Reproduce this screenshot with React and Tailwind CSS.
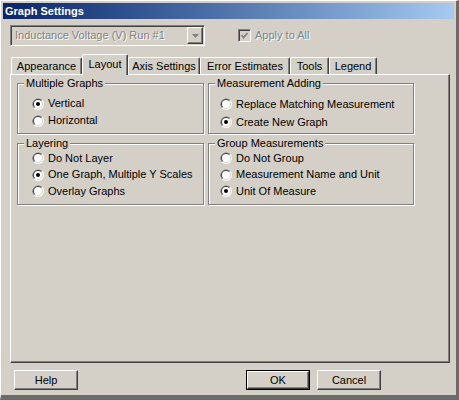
const raised =
	"border border-t-white border-l-white border-r-[#404040] border-b-[#404040] shadow-[inset_-1px_-1px_0_#808080]"
const sunken =
	"border border-t-[#808080] border-l-[#808080] border-r-white border-b-white shadow-[inset_1px_1px_0_#404040,inset_-1px_-1px_0_#d4d0c8]"

const Radio = ({ checked, label }) => {
	return (
		<div className="flex items-center gap-[4px]">
			<svg width="12" height="12" viewBox="0 0 12 12" className="flex-none">
				<circle cx="6" cy="6" r="6" fill="#ffffff" />
				<path d="M1.76 10.24 A6 6 0 0 1 10.24 1.76 Z" fill="#808080" />
				<circle cx="6" cy="6" r="5" fill="#d4d0c8" />
				<path d="M2.46 9.54 A5 5 0 0 1 9.54 2.46 Z" fill="#404040" />
				<circle cx="6" cy="6" r="4" fill="#ffffff" />
				{checked && <circle cx="6" cy="6" r="2" fill="#000000" />}
			</svg>
			<span>{label}</span>
		</div>
	)
}

const GroupBox = ({ title, className, children }) => {
	return (
		<div
			className={
				"relative border border-[#808080] shadow-[inset_1px_1px_0_#fff,1px_1px_0_#fff] " +
				className
			}
		>
			<span className="absolute -top-[7px] left-[6px] px-[2px] leading-[13px] bg-[#d4d0c8]">
				{title}
			</span>
			{children}
		</div>
	)
}

const tabs = [
	{ name: "Appearance", w: "w-[71px]" },
	{ name: "Layout", w: "w-[46px]", active: true },
	{ name: "Axis Settings", w: "w-[72px]" },
	{ name: "Error Estimates", w: "w-[90px]" },
	{ name: "Tools", w: "w-[39px]" },
	{ name: "Legend", w: "w-[48px]" },
]

const App = () => {
	return (
		<div className="w-[459px] h-[400px] flex flex-col bg-[#d4d0c8] border-t border-l border-t-white border-l-white border-r-[3px] border-b-[5px] border-r-[#6b6b6b] border-b-[#6b6b6b] text-[11px] leading-[13px] text-black font-['Liberation_Sans',Arial,sans-serif] overflow-hidden">
			{/* title bar */}
			<div className="mt-[2px] mx-[2px] h-[16px] flex items-center pl-[2px] bg-gradient-to-r from-[#0a246a] to-[#a6caf0] text-white font-bold">
				Graph Settings
			</div>

			<div className="pl-[9px] flex flex-col">
				{/* run selector */}
				<div className="mt-[6px] flex items-center h-[21px]">
					<div className={"w-[195px] h-[21px] flex items-center justify-between pl-[4px] pr-[1px] " + sunken}>
						<span className="text-[#808080] [text-shadow:1px_1px_0_#fff]">
							Inductance Voltage (V) Run #1
						</span>
						<div className={"w-[16px] h-[17px] flex items-center justify-center " + raised}>
							<svg width="7" height="4" viewBox="0 0 7 4">
								<path d="M0 0 H7 L3.5 4 Z" fill="#808080" />
							</svg>
						</div>
					</div>
					<div className="ml-[33px] flex items-center gap-[4px]">
						<div className={"w-[13px] h-[13px] flex items-center justify-center " + sunken}>
							<svg width="9" height="9" viewBox="0 0 9 9">
								<polyline points="1.5,4 3.5,6.5 7.5,2" fill="none" stroke="#808080" strokeWidth="1.8" />
							</svg>
						</div>
						<span className="text-[#808080] [text-shadow:1px_1px_0_#fff]">Apply to All</span>
					</div>
				</div>

				{/* tabs */}
				<div className="mt-[8px] h-[20px] flex items-end pl-[1px]">
					{tabs.map((tab) => (
						<div
							key={tab.name}
							className={
								"flex items-center justify-center rounded-t-[2px] border-t border-l border-r border-t-white border-l-white border-r-[#404040] shadow-[inset_-1px_0_0_#808080] bg-[#d4d0c8] " +
								tab.w +
								(tab.active ? " h-[21px] -mb-px relative z-10 pb-[2px]" : " h-[17px]")
							}
						>
							{tab.name}
						</div>
					))}
				</div>

				{/* panel */}
				<div className="w-[440px] h-[289px] border border-t-white border-l-white border-r-[#404040] border-b-[#404040] shadow-[inset_-1px_-1px_0_#808080] pl-[6px] pt-[8px]">
					<div className="grid grid-cols-[187px_206px] grid-rows-[51px_62px] gap-x-[4px] gap-y-[9px]">
						<GroupBox title="Multiple Graphs" className="pl-[14px] pt-[11px]">
							<div className="h-[17px] flex items-center">
								<Radio checked label="Vertical" />
							</div>
							<div className="h-[17px] flex items-center">
								<Radio label="Horizontal" />
							</div>
						</GroupBox>

						<GroupBox title="Measurement Adding" className="pl-[11px] pt-[11px]">
							<div className="h-[18px] flex items-center">
								<Radio label="Replace Matching Measurement" />
							</div>
							<div className="h-[18px] flex items-center">
								<Radio checked label="Create New Graph" />
							</div>
						</GroupBox>

						<GroupBox title="Layering" className="pl-[14px] pt-[6px]">
							<div className="h-[16.5px] flex items-center">
								<Radio label="Do Not Layer" />
							</div>
							<div className="h-[16.5px] flex items-center">
								<Radio checked label="One Graph, Multiple Y Scales" />
							</div>
							<div className="h-[16.5px] flex items-center">
								<Radio label="Overlay Graphs" />
							</div>
						</GroupBox>

						<GroupBox title="Group Measurements" className="pl-[11px] pt-[6px]">
							<div className="h-[16.5px] flex items-center">
								<Radio label="Do Not Group" />
							</div>
							<div className="h-[16.5px] flex items-center">
								<Radio label="Measurement Name and Unit" />
							</div>
							<div className="h-[16.5px] flex items-center">
								<Radio checked label="Unit Of Measure" />
							</div>
						</GroupBox>
					</div>
				</div>

				{/* buttons */}
				<div className="mt-[7px] w-[440px] flex items-center">
					<button className={"ml-[4px] w-[64px] h-[20px] bg-[#d4d0c8] " + raised}>Help</button>
					<div className="ml-auto mr-[69px] flex gap-[7px]">
						<div className="border border-black">
							<button className={"w-[62px] h-[18px] bg-[#d4d0c8] " + raised}>OK</button>
						</div>
						<button className={"w-[64px] h-[20px] bg-[#d4d0c8] " + raised}>Cancel</button>
					</div>
				</div>
			</div>
		</div>
	)
}

export default App
